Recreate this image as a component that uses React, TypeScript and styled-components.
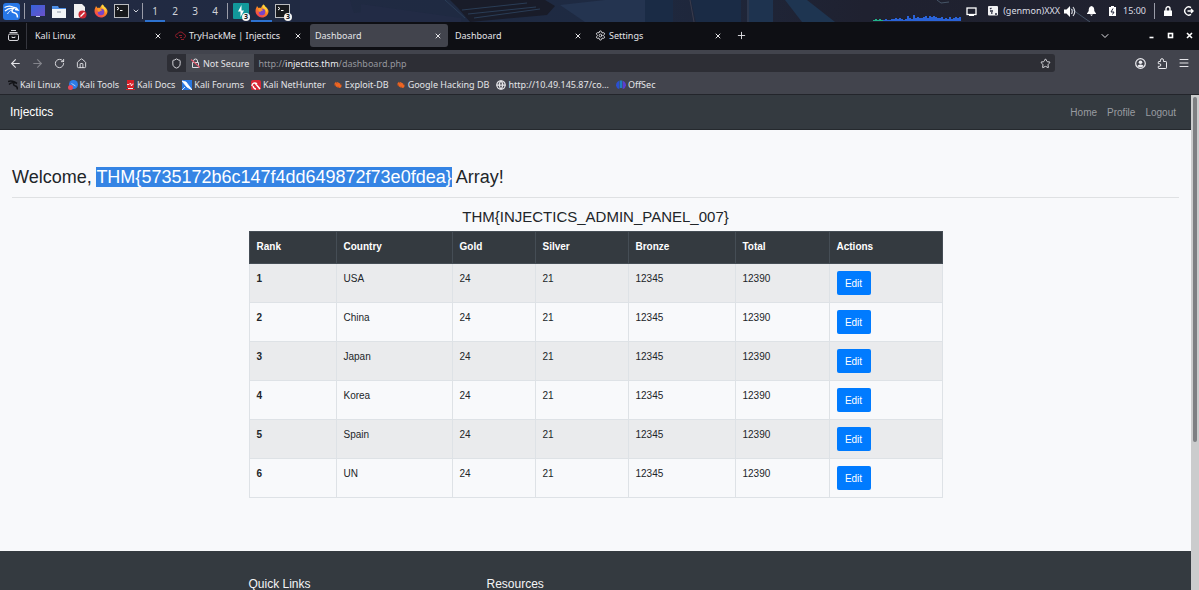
import React from "react";
import styled, { createGlobalStyle } from "styled-components";
import {
  ArrowLeft, ArrowRight, RotateCw, House, Shield, Star, Menu,
  ChevronDown, X, Plus, Settings, Globe,
} from "lucide-react";

const UI = `"Noto Sans", "Open Sans", sans-serif`;
const WEB = `"Liberation Sans", Arial, sans-serif`;

const Global = createGlobalStyle`
  *, *::before, *::after { box-sizing: border-box; }
  body { margin: 0; background: #f8f9fb; }
  button { font: inherit; color: inherit; border: 0; background: none; padding: 0; }
  a { color: inherit; text-decoration: none; }
  svg { display: block; flex: none; }
`;

const Screen = styled.div`
  display: flex;
  flex-direction: column;
  height: 100vh;
  overflow: hidden;
  font-family: ${UI};
  font-size: 9px;
  color: #e4e4e8;
`;

/* ---------- desktop panel ---------- */
const Panel = styled.header`
  position: relative;
  display: flex;
  align-items: stretch;
  height: 22px;
  flex: none;
  background: #212436;
`;
const Wallpaper = styled.svg`
  position: absolute;
  inset: 0;
  width: 100%;
  height: 100%;
`;
const PanelGroup = styled.div`
  position: relative;
  display: flex;
  align-items: center;
`;
const PanelSpacer = styled.div`
  flex: 1;
`;
const PanelButton = styled.button<{ $active?: boolean; $w?: number }>`
  position: relative;
  display: flex;
  align-items: center;
  justify-content: center;
  width: ${(p) => p.$w ?? 21}px;
  height: 22px;
  font-size: 10px;
  color: #d0d3da;
  border-bottom: 2px solid ${(p) => (p.$active ? "#2d72cf" : "transparent")};
  border-top: 2px solid transparent;
`;
const Divider = styled.span`
  width: 1px;
  height: 16px;
  margin: 0 2px;
  background: #9a9ca8;
`;
const Badge = styled.span`
  position: absolute;
  right: 1px;
  bottom: -1px;
  width: 8px;
  height: 8px;
  border-radius: 4px;
  background: #f4f4f4;
  color: #111;
  font-size: 7px;
  font-weight: 700;
  line-height: 8px;
  text-align: center;
`;
const PanelText = styled.span<{ $size?: number; $end?: number }>`
  margin-right: ${(p) => p.$end ?? 0}px;
  font-size: ${(p) => p.$size ?? 9}px;
  line-height: 20px;
  color: #dcdee4;
`;
const Graph = styled.svg`
  align-self: flex-end;
`;

/* ---------- browser ---------- */
const TabStrip = styled.nav`
  display: flex;
  align-items: center;
  height: 28px;
  flex: none;
  padding-bottom: 1px;
  background: #0e0f14;
`;
const TabOverview = styled.div`
  display: flex;
  align-items: center;
  justify-content: center;
  width: 27px;
  height: 26px;
  margin-right: 3px;
  border-right: 1px solid #35363e;
`;
const Tab = styled.div<{ $on?: boolean }>`
  display: flex;
  align-items: center;
  gap: 3px;
  width: 138px;
  height: 23px;
  margin-right: 2px;
  padding: 0 6px 0 5px;
  border-radius: 3px;
  background: ${(p) => (p.$on ? "#42444d" : "transparent")};
`;
const TabTitle = styled.span`
  flex: 1;
  white-space: nowrap;
`;
const StripTools = styled.div`
  display: flex;
  align-items: center;
  flex: 1;
`;
const WindowTools = styled.div`
  display: flex;
  align-items: center;
  gap: 12px;
  margin-left: auto;
  padding-right: 6px;
`;
const IconButton = styled.button<{ $w?: number; $dim?: boolean }>`
  display: flex;
  align-items: center;
  justify-content: center;
  width: ${(p) => p.$w ?? 22}px;
  height: 20px;
  opacity: ${(p) => (p.$dim ? 0.4 : 1)};
`;
const Toolbar = styled.div`
  display: flex;
  align-items: center;
  height: 26px;
  flex: none;
  padding: 0 4px;
  background: #42444d;
`;
const AddressBar = styled.div`
  display: flex;
  align-items: center;
  flex: 1;
  height: 18px;
  margin: 0 74px 0 75px;
  border-radius: 3px;
  background: #2d2e35;
`;
const SecurityChip = styled.button`
  display: flex;
  align-items: center;
  gap: 3px;
  height: 18px;
  margin-right: 4px;
  padding: 0 5px;
  background: #484a52;
`;
const Url = styled.span`
  flex: 1;
  color: #96979e;
  b { font-weight: 400; color: #ececf0; }
`;
const Bookmarks = styled.div`
  display: flex;
  align-items: center;
  gap: 7px;
  height: 19px;
  flex: none;
  padding: 0 8px 1px;
  background: #42444d;
  border-bottom: 1px solid #23252b;
`;
const Bookmark = styled.a`
  display: flex;
  align-items: center;
  gap: 2px;
  white-space: nowrap;
`;

/* ---------- web page ---------- */
const Viewport = styled.div`
  display: flex;
  flex: 1;
  min-height: 0;
  font-family: ${WEB};
  font-size: 10px;
  line-height: 15px;
  color: #212529;
`;
const Page = styled.div`
  display: flex;
  flex-direction: column;
  flex: 1;
  min-width: 0;
  overflow: hidden;
  background: #f8f9fb;
`;
const Scrollbar = styled.div`
  width: 8px;
  padding: 2px 2px 0;
  background: #cbcccd;
`;
const Thumb = styled.div`
  height: 70%;
  border-radius: 2px;
  background: #7d7f82;
`;
const SiteNav = styled.nav`
  display: flex;
  align-items: center;
  flex: none;
  gap: 10px;
  height: 35px;
  padding: 0 15px 0 10px;
  background: #343a40;
  border-bottom: 1px solid #25292e;
  color: #999ca1;
`;
const Brand = styled.a`
  margin-right: auto;
  font-size: 12px;
  color: #fff;
`;
const Main = styled.main`
  flex: none;
  padding: 36px 12px 53px;
`;
const Welcome = styled.h1`
  margin: 0;
  padding-bottom: 9px;
  border-bottom: 1px solid #dfe1e3;
  font-size: 18px;
  font-weight: 400;
  line-height: 22px;
`;
const Selected = styled.mark`
  background: #3584e4;
  color: #fff;
`;
const Board = styled.section`
  max-width: 694px;
  margin: 0 auto;
`;
const BoardTitle = styled.h2`
  margin: 10px 0 5px;
  font-size: 15px;
  font-weight: 400;
  line-height: 18px;
  text-align: center;
`;
const Table = styled.table`
  width: 100%;
  table-layout: fixed;
  border-collapse: collapse;
  text-align: left;
  th, td {
    height: 39px;
    padding: 7px;
    border: 1px solid #dee2e6;
    vertical-align: top;
  }
  thead th {
    height: 32px;
    border-color: #454d55;
    background: #343a40;
    color: #fff;
  }
  tbody tr:nth-child(odd) { background: #eaebed; }
`;
const EditButton = styled.button`
  display: block;
  width: 34px;
  height: 24px;
  border-radius: 2px;
  background: #007bff;
  color: #fff;
`;
const Footer = styled.footer`
  flex: 1 0 auto;
  padding: 25px 12px;
  background: #343a40;
  color: #f4f5f6;
`;
const FooterColumns = styled.div`
  display: grid;
  grid-template-columns: repeat(3, 1fr);
  gap: 20px;
  max-width: 694px;
  margin: 0 auto;
`;
const FooterTitle = styled.h3`
  margin: 0;
  font-size: 12px;
  font-weight: 400;
  line-height: 16px;
`;

/* ---------- drawings ---------- */
const Firefox = () => (
  <svg width="14" height="14" viewBox="0 0 28 28">
    <defs>
      <linearGradient id="fx" x1="0.8" y1="0" x2="0.2" y2="1">
        <stop offset="0" stopColor="#ffd83a" />
        <stop offset="0.45" stopColor="#ff8a1f" />
        <stop offset="1" stopColor="#f0305a" />
      </linearGradient>
    </defs>
    <path d="M17 1c2 2 3 4 3 5 3 0 6 4 7 8 0 8-6 13-13 13S1 21 1 14c0-4 2-7 3-10l3 4c2-1 4-1 5 0 1-3 3-6 5-7z" fill="url(#fx)" />
    <circle cx="14" cy="16" r="6.5" fill="#7a45c8" />
    <path d="M7 9c4-1 7 1 9 4-4 0-4 2-6 3-2 0-4-4-3-7z" fill="#ff9a24" />
    <path d="M17 1c4 4 9 8 6 17 0-5-3-8-6-10-2-2-1-5 0-7z" fill="#ffd23c" />
  </svg>
);
const Terminal = () => (
  <svg width="15" height="14" viewBox="0 0 15 14">
    <rect x="0.5" y="0.5" width="14" height="13" fill="#17191d" stroke="#b9bbbf" />
    <path d="M3 3l2 1.5L3 6M6 6.5h2.500" fill="none" stroke="#fff" />
  </svg>
);
const KaliLogo = () => (
  <svg width="17" height="17" viewBox="0 0 17 17" fill="none" stroke="#fff">
    <rect width="17" height="17" rx="3" fill="#2777e8" stroke="none" />
    <path d="M1.500 4.500C5 2.500 8 2.500 11 4.500l2.500.5 1.500 2-3-.5" strokeWidth="1.300" />
    <path d="M2 8c3-2.500 5.500-3 8.500-2.500C8.500 7 8.500 9 10.500 9.500c3 .5 4 2 4 5" strokeWidth="1.500" />
    <path d="M4.500 11c1-2 2.500-3.500 4.500-4" strokeWidth=".9" />
  </svg>
);
const KaliMark = () => (
  <svg width="10" height="10" viewBox="0 0 10 10" fill="none" stroke="#121317">
    <path d="M0 1.500c2.500-1 4.500-.5 6.500.5L9 3.500" strokeWidth="1.600" />
    <path d="M1 4.500c1.500-1.500 3-2 5-1.500-1 1.500 0 2.500 1 2.700C9 6 9.500 8 9.500 9.500" strokeWidth="1.500" />
  </svg>
);
const Monitor = () => (
  <svg width="14" height="12" viewBox="0 0 14 12">
    <defs>
      <linearGradient id="desk" x2="1" y2="1"><stop stopColor="#3563dc" /><stop offset="1" stopColor="#6b51c9" /></linearGradient>
    </defs>
    <rect width="14" height="11" fill="url(#desk)" />
    <path d="M5 11.500h4" stroke="#c9d2ec" />
  </svg>
);
const Folder = () => (
  <svg width="14" height="13" viewBox="0 0 14 13">
    <path d="M0 1h6l1 2h7v3H0z" fill="#4d8fe8" />
    <path d="M0 4h14v9H0z" fill="#f2f4f7" />
    <path d="M5 7h4" stroke="#8b95a5" />
  </svg>
);
const TextEditor = () => (
  <svg width="14" height="15" viewBox="0 0 14 15">
    <path d="M1 0h8l3 3v11H1z" fill="#f1f1f2" />
    <circle cx="9.500" cy="10.500" r="4" fill="#cf2734" />
    <path d="M7.500 12.500l4-4" stroke="#fff" strokeWidth="1.200" />
  </svg>
);
const BoltApp = () => (
  <svg width="16" height="16" viewBox="0 0 16 16">
    <rect width="16" height="16" rx="1" fill="#12989b" />
    <path d="M8.500 2L5 8.500h2.500V14L11 7.500H8.500z" fill="#fff" />
  </svg>
);
const DisplayIcon = () => (
  <svg width="11" height="9" viewBox="0 0 11 9">
    <rect x="1" y="1" width="9" height="6.500" fill="none" stroke="#fff" strokeWidth="1.300" />
    <path d="M3 8.500h5" stroke="#fff" />
  </svg>
);
const GenmonIcon = () => (
  <svg width="10" height="10" viewBox="0 0 10 10">
    <rect width="10" height="9.500" rx="1" fill="#f0f0f2" />
    <path d="M2 3l1.500-1M2 5h3M7 8h2M3 7h1.500" stroke="#23263a" strokeWidth="1.300" />
  </svg>
);
const Speaker = () => (
  <svg width="12" height="11" viewBox="0 0 12 11">
    <path d="M0 3.500h2.500L6 0v11L2.500 7.500H0z" fill="#fff" />
    <path d="M7.500 3q1.500 2.500 0 5M9 1q3.500 4.500 0 9" fill="none" stroke="#d5d7dd" strokeWidth="1.200" />
  </svg>
);
const Bell = () => (
  <svg width="9" height="10" viewBox="0 0 9 10">
    <path d="M4.500 0C7 .5 7.300 2.500 7.300 5L9 7.500v.5H0v-.5L1.700 5C1.700 2.500 2 .5 4.500 0zM3 8.500h3L4.500 10z" fill="#fff" />
  </svg>
);
const Battery = () => (
  <svg width="7" height="10" viewBox="0 0 7 10">
    <path d="M2 0h3v1h2v9H0V1h2z" fill="#fff" />
    <path d="M4 2.500L2 6h3L3.500 8.500" fill="none" stroke="#23263a" />
  </svg>
);
const PadlockIcon = () => (
  <svg width="8" height="10" viewBox="0 0 8 10">
    <path d="M2 5V2.800a2 2 0 014 0V5" fill="none" stroke="#fff" strokeWidth="1.400" />
    <rect y="4.500" width="8" height="5.500" fill="#fff" />
  </svg>
);
const LogoutIcon = () => (
  <svg width="11" height="10" viewBox="0 0 11 10">
    <path d="M8 1.700A4 4 0 108 8.300M4.500 5H10M8 3l2 2-2 2" fill="none" stroke="#fff" strokeWidth="1.400" />
  </svg>
);
const TabBox = () => (
  <svg width="11" height="11" viewBox="0 0 11 11" fill="none" stroke="#d5d5da">
    <path d="M3 .5h5M1.500 2.500h8" />
    <rect x=".5" y="4" width="10" height="6.500" rx="1.500" />
    <path d="M4 6.500v1h3v-1" />
  </svg>
);
const ThmCloud = () => (
  <svg width="11" height="9" viewBox="0 0 11 9" fill="none" stroke="#8c1d2b">
    <path d="M3 6.500H2Q.5 6 .5 4.500T2.500 3Q3.500.5 6 1t2.500 2Q10.500 3 10.500 5T8.500 7" />
    <path d="M4 4.500h3M5 6.500h2M6 8.500h3" />
  </svg>
);
const BrokenLock = () => (
  <svg width="9" height="10" viewBox="0 0 9 10" fill="none">
    <path d="M2.500 4.500V3a2 2 0 014 0v1.500M1.500 4.500h6v5h-6z" stroke="#dddde2" />
    <path d="M0 1.500l9 8" stroke="#e2546a" strokeWidth="1.200" />
  </svg>
);
const AccountIcon = () => (
  <svg width="11" height="11" viewBox="0 0 11 11">
    <circle cx="5.500" cy="5.500" r="4.800" fill="none" stroke="#ececf0" strokeWidth="1.200" />
    <circle cx="5.500" cy="4.200" r="1.800" fill="#ececf0" />
    <path d="M2.300 8.300Q2.800 6.500 5.500 6.500t3.200 1.800Q5.500 10 2.300 8.300z" fill="#ececf0" />
  </svg>
);
const ExtensionIcon = () => (
  <svg width="11" height="11" viewBox="0 0 11 11" fill="none" stroke="#ececf0" strokeLinejoin="round">
    <path d="M3.500 3.500V2.200a1.500 1.500 0 013 0v1.300h2.300a.7.700 0 01.7.7v5.600a.7.700 0 01-.7.7H2a.7.700 0 01-.7-.7V8.300H2.500a1.300 1.300 0 000-2.600H1.300V4.200a.7.700 0 01.7-.7z" />
  </svg>
);
const ToolsMark = () => (
  <svg width="10" height="10" viewBox="0 0 10 10">
    <circle cx="5.500" cy="4.500" r="4.500" fill="#2d7be6" />
    <circle cx="2.500" cy="7.500" r="2.500" fill="#e8485a" />
    <path d="M3.500 3.500l4 2.500" stroke="#a9cbfa" />
  </svg>
);
const DocsMark = () => (
  <svg width="9" height="10" viewBox="0 0 9 10">
    <path d="M1 0h7v8H1zM0 9h9v1H0z" fill="#d81f27" />
    <path d="M1 4.500h2L4.500 3l1 3L6.500 4h1" fill="none" stroke="#fff" strokeWidth=".8" />
    <path d="M2 8.500h5" stroke="#eee" />
  </svg>
);
const ForumsMark = () => (
  <svg width="10" height="10" viewBox="0 0 10 10">
    <rect width="10" height="10" fill="#2776df" />
    <path d="M0 1l4 1 6 8-5-3zM0 10l3-3" fill="#fff" stroke="#fff" strokeWidth=".8" />
  </svg>
);
const HunterMark = () => (
  <svg width="10" height="10" viewBox="0 0 10 10">
    <rect width="10" height="10" rx="2" fill="#d92736" />
    <path d="M1 6c0-3 3-4 5-2M4 3l5 6M2 6q1 3 3 3" fill="none" stroke="#fff" strokeWidth="1.400" />
  </svg>
);
const BugMark = () => (
  <svg width="10" height="10" viewBox="0 0 10 10">
    <ellipse cx="5" cy="5" rx="3.800" ry="2.300" transform="rotate(32 5 5)" fill="#ee6522" />
    <path d="M3 1.500l1 2M1 5.500l2-.5M6 8l-1-1.500M9 4l-2 .8" stroke="#8a4526" strokeWidth=".7" />
  </svg>
);
const OffSecMark = () => (
  <svg width="10" height="10" viewBox="0 0 10 10">
    <path d="M0 5.500a5 5 0 013.300-4.800v8.500A4.500 4.500 0 010 5.500z" fill="#2b4fd0" />
    <path d="M3.700.5h2.600v7.500H3.700z" fill="#1f7fc0" />
    <path d="M6.700.7A5 5 0 0110 5.500a4.500 4.500 0 01-3.300 3.700z" fill="#5a3fd0" />
  </svg>
);
const WindowGlyph = ({ kind }: { kind: "min" | "max" | "close" }) => (
  <svg width="7" height="7" viewBox="0 0 7 7" fill="none" stroke="#fff" strokeWidth="1.600">
    {kind === "min" && <path d="M1.500 5.500h4" />}
    {kind === "max" && <rect x="1.500" y="1.500" width="4" height="4" />}
    {kind === "close" && <path d="M1 1l5 5M6 1L1 6" />}
  </svg>
);

const load = [1, 2, 1, 2, 1, 1, 2, 1, 1, 2, 2, 3, 2, 3, 2, 1, 2, 5, 3, 2, 6, 3, 4, 3, 3, 4, 5, 3, 5, 4, 5, 4, 3, 3, 4, 2, 3, 2, 4, 2, 3, 4, 3, 4];

const tabs = [
  { title: "Kali Linux" },
  { title: "TryHackMe | Injectics", icon: <ThmCloud /> },
  { title: "Dashboard", on: true },
  { title: "Dashboard" },
  { title: "Settings", icon: <Settings size={11} /> },
];

const bookmarks = [
  { label: "Kali Linux", icon: <KaliMark /> },
  { label: "Kali Tools", icon: <ToolsMark /> },
  { label: "Kali Docs", icon: <DocsMark /> },
  { label: "Kali Forums", icon: <ForumsMark /> },
  { label: "Kali NetHunter", icon: <HunterMark /> },
  { label: "Exploit-DB", icon: <BugMark /> },
  { label: "Google Hacking DB", icon: <BugMark /> },
  { label: "http://10.49.145.87/co…", icon: <Globe size={10} strokeWidth={3} /> },
  { label: "OffSec", icon: <OffSecMark /> },
];

const columns: [string, number][] = [
  ["Rank", 87], ["Country", 116], ["Gold", 83], ["Silver", 93], ["Bronze", 107], ["Total", 94], ["Actions", 113],
];
const countries = ["USA", "China", "Japan", "Korea", "Spain", "UN"];

export default function App() {
  return (
    <Screen>
      <Global />
      <Panel>
        <Wallpaper viewBox="0 0 1199 22" preserveAspectRatio="none" aria-hidden="true">
          <defs>
            <linearGradient id="wall">
              <stop offset="0" stopColor="#222a42" />
              <stop offset="0.5" stopColor="#1e2a42" />
              <stop offset="0.72" stopColor="#1f2130" />
              <stop offset="1" stopColor="#20222f" />
            </linearGradient>
          </defs>
          <rect width="1199" height="22" fill="url(#wall)" />
          <path d="M300 0h50l4 13 7-1v-8l100 14v4H300z" fill="#222b45" />
          <path d="M450 0h95l10 6-8 9-77 7-12-14z" fill="#191c29" />
          <path d="M462 10l65-7M468 14l68-7M474 18l66-9M445 0l20 18" stroke="#2a3d56" fill="none" />
          <path d="M560 5l45-5h40v22h-60z" fill="#243450" />
          <path d="M645 0h28v22h-28zM691 0h50v22h-45z" fill="#1a2b45" />
          <path d="M747 0h26v22h-26z" fill="#1e334f" />
          <path d="M785 0h22l28 22h-33z" fill="#1e3551" />
          <path d="M690 0l4 22M748 0v22" stroke="#3a3c4d" />
          <path d="M937 0l4 3 8-1M1070 8l20 14" stroke="#465567" fill="none" />
        </Wallpaper>
        <PanelGroup>
          <PanelButton $w={22} aria-label="Applications"><KaliLogo /></PanelButton>
          <Divider />
          <PanelButton aria-label="Show desktop"><Monitor /></PanelButton>
          <PanelButton aria-label="Files"><Folder /></PanelButton>
          <PanelButton aria-label="Text editor"><TextEditor /></PanelButton>
          <PanelButton aria-label="Firefox"><Firefox /></PanelButton>
          <PanelButton aria-label="Terminal"><Terminal /></PanelButton>
          <PanelButton $w={8} aria-label="More terminals"><ChevronDown size={8} strokeWidth={3} /></PanelButton>
          <Divider />
          {[1, 2, 3, 4].map((n) => (
            <PanelButton key={n} $w={20} $active={n === 1}>{n}</PanelButton>
          ))}
          <Divider />
          <PanelButton aria-label="Proxy windows"><BoltApp /><Badge>3</Badge></PanelButton>
          <PanelButton $active aria-label="Firefox window"><Firefox /></PanelButton>
          <PanelButton aria-label="Terminal windows"><Terminal /><Badge>3</Badge></PanelButton>
        </PanelGroup>
        <PanelSpacer />
        <PanelGroup>
          <Graph width="88" height="7" viewBox="0 0 88 7">
            {load.map((h, i) => (
              <rect key={i} x={i * 2} y={6 - h} width="2" height={h} fill={i < 5 ? "#22b38a" : "#2a63d8"} />
            ))}
          </Graph>
          <PanelButton aria-label="Display"><DisplayIcon /></PanelButton>
          <PanelButton aria-label="Monitor"><GenmonIcon /></PanelButton>
          <PanelText>(genmon)XXX</PanelText>
          <PanelButton aria-label="Volume"><Speaker /></PanelButton>
          <PanelButton aria-label="Notifications"><Bell /></PanelButton>
          <PanelButton aria-label="Battery"><Battery /></PanelButton>
          <PanelText $size={9} $end={6}>15:00</PanelText>
          <Divider />
          <PanelButton aria-label="Lock"><PadlockIcon /></PanelButton>
          <PanelButton aria-label="Log out"><LogoutIcon /></PanelButton>
        </PanelGroup>
      </Panel>

      <TabStrip>
        <TabOverview><TabBox /></TabOverview>
        {tabs.map((t, i) => (
          <Tab key={i} $on={t.on}>
            {t.icon}
            <TabTitle>{t.title}</TabTitle>
            <IconButton $w={8} aria-label="Close tab"><X size={8} strokeWidth={3} /></IconButton>
          </Tab>
        ))}
        <StripTools>
          <IconButton aria-label="New tab"><Plus size={11} /></IconButton>
          <WindowTools>
            <IconButton $w={62} aria-label="List all tabs"><ChevronDown size={12} /></IconButton>
            <IconButton $w={7} aria-label="Minimize"><WindowGlyph kind="min" /></IconButton>
            <IconButton $w={7} aria-label="Maximize"><WindowGlyph kind="max" /></IconButton>
            <IconButton $w={7} aria-label="Close"><WindowGlyph kind="close" /></IconButton>
          </WindowTools>
        </StripTools>
      </TabStrip>

      <Toolbar>
        <IconButton aria-label="Back"><ArrowLeft size={13} /></IconButton>
        <IconButton aria-label="Forward" $dim><ArrowRight size={13} /></IconButton>
        <IconButton aria-label="Reload"><RotateCw size={11} /></IconButton>
        <IconButton aria-label="Home"><House size={11} /></IconButton>
        <AddressBar>
          <IconButton $w={19} aria-label="Protections"><Shield size={11} /></IconButton>
          <SecurityChip><BrokenLock />Not Secure</SecurityChip>
          <Url>http://<b>injectics.thm</b>/dashboard.php</Url>
          <IconButton $w={20} aria-label="Bookmark"><Star size={11} /></IconButton>
        </AddressBar>
        <IconButton aria-label="Account"><AccountIcon /></IconButton>
        <IconButton aria-label="Extensions"><ExtensionIcon /></IconButton>
        <IconButton aria-label="Menu"><Menu size={12} /></IconButton>
      </Toolbar>

      <Bookmarks>
        {bookmarks.map((b) => (
          <Bookmark key={b.label} href="#">{b.icon}{b.label}</Bookmark>
        ))}
      </Bookmarks>

      <Viewport>
        <Page>
          <SiteNav>
            <Brand href="#">Injectics</Brand>
            <a href="#">Home</a>
            <a href="#">Profile</a>
            <a href="#">Logout</a>
          </SiteNav>
          <Main>
            <Welcome>
              Welcome, <Selected>{"THM{5735172b6c147f4dd649872f73e0fdea}"}</Selected> Array!
            </Welcome>
            <Board>
              <BoardTitle>{"THM{INJECTICS_ADMIN_PANEL_007}"}</BoardTitle>
              <Table>
                <colgroup>
                  {columns.map(([name, w]) => <col key={name} width={w} />)}
                </colgroup>
                <thead>
                  <tr>{columns.map(([name]) => <th key={name} scope="col">{name}</th>)}</tr>
                </thead>
                <tbody>
                  {countries.map((c, i) => (
                    <tr key={c}>
                      <th scope="row">{i + 1}</th>
                      <td>{c}</td>
                      <td>24</td>
                      <td>21</td>
                      <td>12345</td>
                      <td>12390</td>
                      <td><EditButton>Edit</EditButton></td>
                    </tr>
                  ))}
                </tbody>
              </Table>
            </Board>
          </Main>
          <Footer>
            <FooterColumns>
              <FooterTitle>Quick Links</FooterTitle>
              <FooterTitle>Resources</FooterTitle>
            </FooterColumns>
          </Footer>
        </Page>
        <Scrollbar><Thumb /></Scrollbar>
      </Viewport>
    </Screen>
  );
}
